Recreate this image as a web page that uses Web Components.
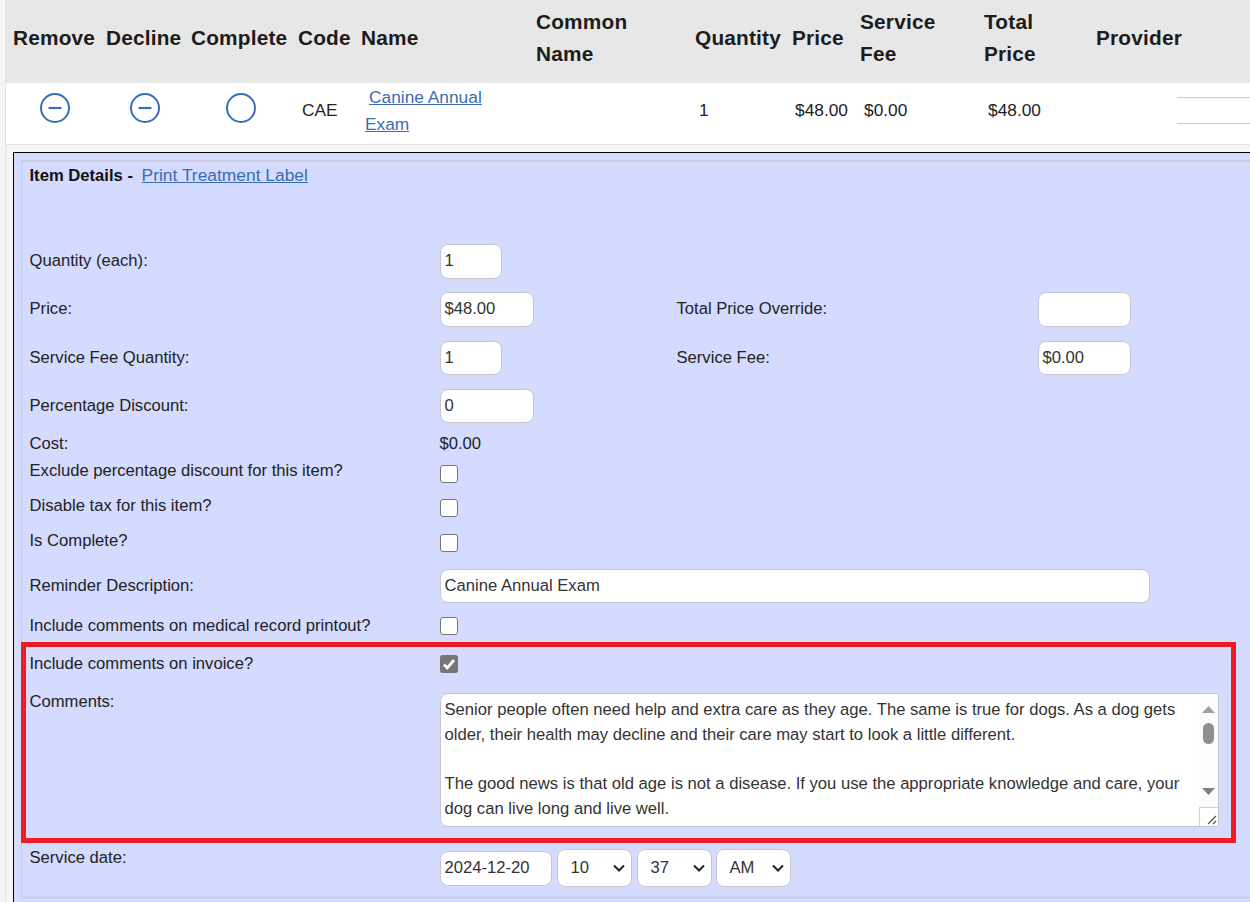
<!DOCTYPE html>
<html lang="en"><head><meta charset="utf-8"><title>Item Details</title>
<style>
html,body{margin:0;height:902px;overflow:hidden;background:#f5f5f5;color:#222;font:16.64px "Liberation Sans",Arial,sans-serif}
</style></head><body>
<visit-page>
  <table-head></table-head>
  <table-line></table-line>
  <item-panel>
    <panel-title></panel-title>
    <form-row style="--h:48px"><span slot="a" class="l">Quantity (each):</span><text-box slot="b" w="62" h="35">1</text-box></form-row>
    <form-row style="--h:49px"><span slot="a">Price:</span><text-box slot="b" w="94" h="35">$48.00</text-box><span slot="c">Total Price Override:</span><text-box slot="d" w="93" h="35"></text-box></form-row>
    <form-row style="--h:48px"><span slot="a">Service Fee Quantity:</span><text-box slot="b" w="62" h="34">1</text-box><span slot="c">Service Fee:</span><text-box slot="d" w="93" h="34">$0.00</text-box></form-row>
    <form-row style="--h:44px"><span slot="a">Percentage Discount:</span><text-box slot="b" w="94" h="34">0</text-box></form-row>
    <form-row style="--h:27px;--lt:0px;--vt:1px"><span slot="a">Cost:</span><span slot="b">$0.00</span></form-row>
    <form-row style="--h:35px;--lt:0px;--vt:5px"><span slot="a">Exclude percentage discount for this item?</span><check-box slot="b"></check-box></form-row>
    <form-row style="--h:35px;--lt:0px;--vt:4px"><span slot="a">Disable tax for this item?</span><check-box slot="b"></check-box></form-row>
    <form-row style="--h:39px;--lt:0px;--vt:4px"><span slot="a">Is Complete?</span><check-box slot="b"></check-box></form-row>
    <form-row style="--h:46px;--lt:6px"><span slot="a">Reminder Description:</span><text-box slot="b" w="710" h="34" pad="4">Canine Annual Exam</text-box></form-row>
    <form-row style="--h:38px;--lt:0px;--vt:2px"><span slot="a">Include comments on medical record printout?</span><check-box slot="b"></check-box></form-row>
    <form-row style="--h:40px;--lt:0px;--vt:2px"><span slot="a">Include comments on invoice?</span><check-box slot="b" checked></check-box></form-row>
    <form-row style="--h:154px;--lt:-2px"><span slot="a">Comments:</span><comment-box slot="b">Senior people often need help and extra care as they age. The same is true for dogs. As a dog gets older, their health may decline and their care may start to look a little different.

The good news is that old age is not a disease. If you use the appropriate knowledge and care, your dog can live long and live well.</comment-box></form-row>
    <form-row style="--h:50px;--lt:0px;--vt:2px"><span slot="a">Service date:</span><date-time slot="b"></date-time></form-row>
    <red-mark></red-mark>
  </item-panel>
</visit-page>
<script>
const COLS='92px 86px 107px 63px 175px 159px 96px 69px 124px 112px 1fr';
function def(name,css,html,init){
  customElements.define(name,class extends HTMLElement{
    connectedCallback(){
      if(this.shadowRoot)return;
      const r=this.attachShadow({mode:'open'});
      r.innerHTML='<style>'+css+'</style>'+(typeof html==='function'?html(this):html);
      if(init)init(this,r);
    }
  });
}
def('visit-page',':host{display:block;box-sizing:border-box;width:1250px;height:902px;padding-left:5px;overflow:hidden;position:relative}:host::before{content:"";position:absolute;left:5px;top:0;bottom:0;width:1px;background:#e4e4e4}','<slot></slot>');
def('table-head',`:host{display:grid;grid-template-columns:${COLS};box-sizing:border-box;height:83px;padding:0 0 7px 8px;background:#e7e7e7;align-items:center;font-weight:700;font-size:20.8px;line-height:32px;letter-spacing:.2px;color:#1c1c1c}.s{padding-left:1px}`,
 ['Remove','Decline','Complete','Code','Name','Common<br>Name','Quantity','Price','Service<br>Fee','Total<br>Price','Provider'].map(t=>`<div class="${t==='Decline'||t==='Price'?'s':''}">${t}</div>`).join(''));
def('circle-icon',':host{display:block;width:30px;height:30px}svg{display:block}',
 e=>`<svg width="30" height="30" viewBox="0 0 30 30" fill="none" stroke="#3670b4" stroke-width="2"><circle cx="15" cy="15" r="14"/>${e.hasAttribute('minus')?'<path d="M8.500 15h13" stroke-width="2.200"/>':''}</svg>`);
def('table-line',`:host{display:grid;grid-template-columns:${COLS};grid-template-rows:53px;box-sizing:content-box;height:53px;padding:0 0 8px 8px;background:#fff;border-bottom:1px solid #e3e3e3;align-items:center;font-size:17.33px;line-height:27px;color:#222}
 .c{padding-left:4px;margin-top:2px}a{color:#3a6cb4;text-decoration:underline}.n{margin-top:2px}.sp{padding-left:4px}
 .p{margin-left:81px;height:25px;border:solid #ccc;border-width:1px 0;margin-top:2px}.i{margin-top:-3px}`,
 `<div class="i" style="padding-left:27px"><circle-icon minus></circle-icon></div><div class="i" style="padding-left:25px"><circle-icon minus></circle-icon></div><div class="i" style="padding-left:35px"><circle-icon></circle-icon></div>
 <div class="c">CAE</div><div class="c n"><span class="sp"></span><a href="#">Canine Annual<br>Exam</a></div><div></div><div class="c">1</div><div class="c">$48.00</div><div class="c">$0.00</div><div class="c">$48.00</div><div class="p"></div>`);
def('item-panel',':host{display:block;position:relative;box-sizing:border-box;margin:7px 0 0 8px;width:1300px;height:760px;background:#d5daff;border:solid #000;border-width:1.5px 0 0 1.5px;padding:6.5px 0 0 6.5px}.f{border:solid #c9cbdc;border-width:2px 0 1px 1px;height:738px;box-sizing:border-box;padding:0 0 0 8px}',
 '<div class="f"><slot></slot></div>');
def('panel-title',':host{display:block;height:82px;font-size:16.64px;line-height:20px;color:#111;padding-top:3px;box-sizing:border-box}b{font-weight:700;margin-right:4px}a{color:#3a6cb4;font-size:17.4px}',
 '<b>Item Details -</b> <a href="#">Print Treatment Label</a>');
def('form-row',':host{display:grid;grid-template-columns:410px 237px 361px 200px;height:var(--h);font-size:16.64px;line-height:20px;color:#222}.l{margin-top:calc(var(--lt,6px) + 1px)}.v{padding-top:var(--vt,0px)}',
 '<div class="l"><slot name="a"></slot></div><div class="v"><slot name="b"></slot></div><div class="l"><slot name="c"></slot></div><div class="v"><slot name="d"></slot></div>');
def('text-box',':host{display:flex;flex:none;box-sizing:border-box;background:#fff;border:1px solid #c6c6cf;border-radius:8px;padding:0 4px;font-size:16.64px;color:#333;align-items:center;white-space:nowrap}',
 '<slot></slot>',(e)=>{e.style.width=e.getAttribute('w')+'px';e.style.height=e.getAttribute('h')+'px';});
def('check-box',':host{display:block;width:18px;height:18px}svg{display:block}',
 e=>e.hasAttribute('checked')
 ?'<svg width="18" height="18" viewBox="0 0 18 18"><rect width="18" height="18" rx="2.500" fill="#767676"/><path d="M4 9.500 7.300 13 14 5" fill="none" stroke="#fff" stroke-width="2.800"/></svg>'
 :'<svg width="18" height="18" viewBox="0 0 18 18"><rect x=".5" y=".5" width="17" height="17" rx="2.500" fill="#fff" stroke="#767676"/></svg>');
def('comment-box',`:host{display:flex;box-sizing:border-box;width:779px;height:134px;background:#fff;border:1px solid #c6c6cf;border-radius:8px 2px 2px 8px;overflow:hidden;color:#333;font-size:16.64px;line-height:24.7px}
 .t{flex:1;padding:4.400px 4px 0;white-space:pre-wrap;overflow:hidden}
 .s{width:19px;background:#fbfbfb;display:flex;flex-direction:column;align-items:center}
 .up{margin-top:12px}.th{width:11px;height:21px;border-radius:6px;background:#8f8f8f;margin-top:10px}.dn{margin-top:44px}.gap{flex:1}
 .r{width:19px;height:19px;box-sizing:border-box;background:#fff;border:solid #d0d0d0;border-width:1px 0 0 1px;align-self:stretch}svg{display:block}`,
 `<div class="t"><slot></slot></div><div class="s"><svg class="up" width="13" height="7" viewBox="0 0 13 7"><path d="M6.500 0 13 7H0z" fill="#a0a0a0"/></svg><div class="th"></div><svg class="dn" width="13" height="7" viewBox="0 0 13 7"><path d="M0 0h13L6.500 7z" fill="#808080"/></svg><div class="gap"></div><div class="r"><svg width="18" height="18" viewBox="0 0 18 18" fill="none" stroke="#555" stroke-width="1.200"><path d="M8 16 16 8M13 16l3-3"/></svg></div></div>`);
def('select-box',':host{display:flex;flex:none;box-sizing:border-box;height:38px;align-items:center;justify-content:space-between;background:#fff;border:1px solid #c6c6cf;border-radius:8px;font-size:16.64px;color:#333;padding:0 6px 0 13px}svg{display:block}',
 e=>`<span><slot></slot></span><svg width="12" height="8" viewBox="0 0 12 8" fill="none" stroke="#222" stroke-width="2"><path d="M1 1.500 6 6.500 11 1.500"/></svg>`,
 e=>{e.style.width=e.getAttribute('w')+'px';});
def('date-time',':host{display:flex;gap:5px;align-items:flex-start;width:max-content}text-box{margin-top:2px}',
 '<text-box w="112" h="35">2024-12-20</text-box><select-box w="75">10</select-box><select-box w="75">37</select-box><select-box w="75" style="margin-left:-1px">AM</select-box>');
def('red-mark',':host{position:absolute;left:6.500px;top:489px;width:1215px;height:201px;box-sizing:border-box;border:5px solid #ed1c24;pointer-events:none}','');
</script>
</body></html>
